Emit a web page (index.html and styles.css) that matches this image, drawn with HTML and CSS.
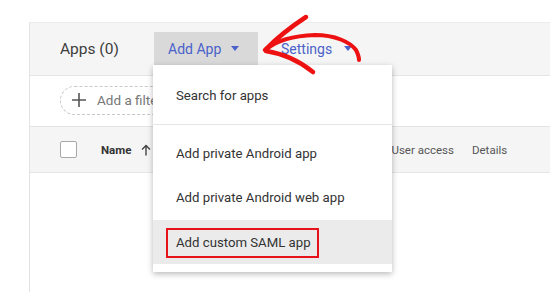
FILE: index.html
```html
<!DOCTYPE html>
<html>
<head>
<meta charset="utf-8">
<link rel="stylesheet" href="styles.css">
</head>
<body>
<div class="panel">
  <div class="header">
    <span class="title">Apps (0)</span>
    <div class="addapp">
      <div class="btn btn-active">Add App <span class="caret"></span></div>
      <div class="menu">
        <div class="menu-search">Search for apps</div>
        <div class="menu-list">
          <div class="menu-item">Add private Android app</div>
          <div class="menu-item">Add private Android web app</div>
          <div class="menu-item menu-item-hover"><span class="highlight">Add custom SAML app</span></div>
        </div>
      </div>
    </div>
    <div class="btn btn-settings">Settings <span class="caret"></span></div>
  </div>
  <div class="filter-row">
    <div class="chip">
      <svg class="plus" width="16" height="16" viewBox="0 0 16 16"><path d="M8 1v14M1 8h14" stroke="#555" stroke-width="1.6" fill="none"/></svg>
      <span>Add a filter</span>
    </div>
  </div>
  <div class="thead">
    <span class="checkbox"></span>
    <span class="col-name">Name</span>
    <svg class="sort" width="10" height="12" viewBox="0 0 10 12"><path d="M5 11.5V1.5M1 5.5L5 1.5L9 5.5" stroke="#444" stroke-width="1.4" fill="none"/></svg>
    <span class="col-user">User access</span>
    <span class="col-details">Details</span>
  </div>
  <div class="tbody"></div>
</div>
<svg class="annot" width="550" height="292" viewBox="0 0 550 292">
  <g fill="none" stroke="#ee1111" stroke-linecap="round" stroke-linejoin="round">
    <path d="M267 49 C 276 41, 290 36, 315 35 C 335 35, 350 42, 356 50 C 358 54, 359 57, 359 60" stroke-width="4"/>
    <path d="M265 50 Q 283 32 306 17" stroke-width="4.5"/>
    <path d="M266 51 Q 292 55 313 72" stroke-width="4.5"/>
  </g>
</svg>
</body>
</html>
```
FILE: styles.css
```css
html, body {
  margin: 0;
  padding: 0;
  background: #ffffff;
  font-family: Roboto, "Liberation Sans", Arial, sans-serif;
  overflow: hidden;
}

body {
  width: 550px;
  height: 292px;
  position: relative;
}

.panel {
  margin-top: 22px;
  margin-left: 29px;
  border-left: 1px solid #e3e3e3;
  border-top: 1px solid #ececec;
  height: 270px;
}

.header {
  height: 52px;
  background: #f5f5f5;
  border-bottom: 1px solid #e4e4e4;
  display: flex;
  align-items: flex-start;
  padding-left: 30px;
}

.title {
  width: 94px;
  font-size: 15.5px;
  color: #3d3d3d;
  line-height: 52px;
}

.addapp {
  position: relative;
}

.btn {
  margin-top: 9px;
  height: 33px;
  padding: 0 14px;
  display: flex;
  align-items: center;
  gap: 9px;
  font-size: 14px;
  color: #4a62c9;
}

.btn-active {
  background: #d9d9d9;
  width: 76px;
}

.btn-settings {
  margin-left: 9px;
  gap: 11px;
}

.caret {
  width: 0;
  height: 0;
  border-left: 4.5px solid transparent;
  border-right: 4.5px solid transparent;
  border-top: 5px solid #4a62c9;
  margin-left: 1px;
}

.menu {
  position: absolute;
  left: -1px;
  top: 42px;
  width: 239px;
  background: #ffffff;
  box-shadow: 0 2px 6px rgba(0, 0, 0, 0.28);
  z-index: 5;
  color: #333333;
  font-size: 13.2px;
  white-space: nowrap;
}

.menu-search {
  height: 59px;
  line-height: 61px;
  padding-left: 23px;
  border-bottom: 1px solid #e6e6e6;
}

.menu-list {
  padding: 7px 0 8px;
}

.menu-item {
  height: 44px;
  line-height: 44px;
  padding-left: 23px;
}

.menu-item-hover {
  background: #ebebeb;
  display: flex;
  align-items: center;
}

.highlight {
  border: 2px solid #e8121b;
  padding: 0 6px 0 8px;
  margin-left: -10px;
  height: 26px;
  line-height: 26px;
  margin-top: 2px;
}

.filter-row {
  height: 50px;
  border-bottom: 1px solid #e4e4e4;
  padding-left: 30px;
  display: flex;
  align-items: center;
  background: #ffffff;
}

.chip {
  height: 27px;
  width: 130px;
  border: 1px dashed #c8c8c8;
  border-radius: 15px;
  display: flex;
  align-items: center;
  padding-left: 10px;
  gap: 10px;
  font-size: 13.5px;
  color: #777777;
  margin-top: -2px;
}

.thead {
  height: 45px;
  background: #f5f5f5;
  border-bottom: 1px solid #e6e6e6;
  display: flex;
  align-items: center;
  padding-left: 30px;
  font-size: 11.5px;
  color: #555555;
}

.checkbox {
  width: 15px;
  height: 15px;
  border: 1.5px solid #a8a8a8;
  border-radius: 2px;
  margin-right: 24px;
  background: #ffffff;
}

.col-name {
  font-weight: bold;
  color: #333333;
  margin-right: 10px;
}

.col-user {
  margin-left: 240px;
}

.col-details {
  margin-left: 18px;
}

.tbody {
  height: 120px;
  background: #ffffff;
}

.annot {
  position: absolute;
  left: 0;
  top: 0;
  pointer-events: none;
  z-index: 10;
}
```
